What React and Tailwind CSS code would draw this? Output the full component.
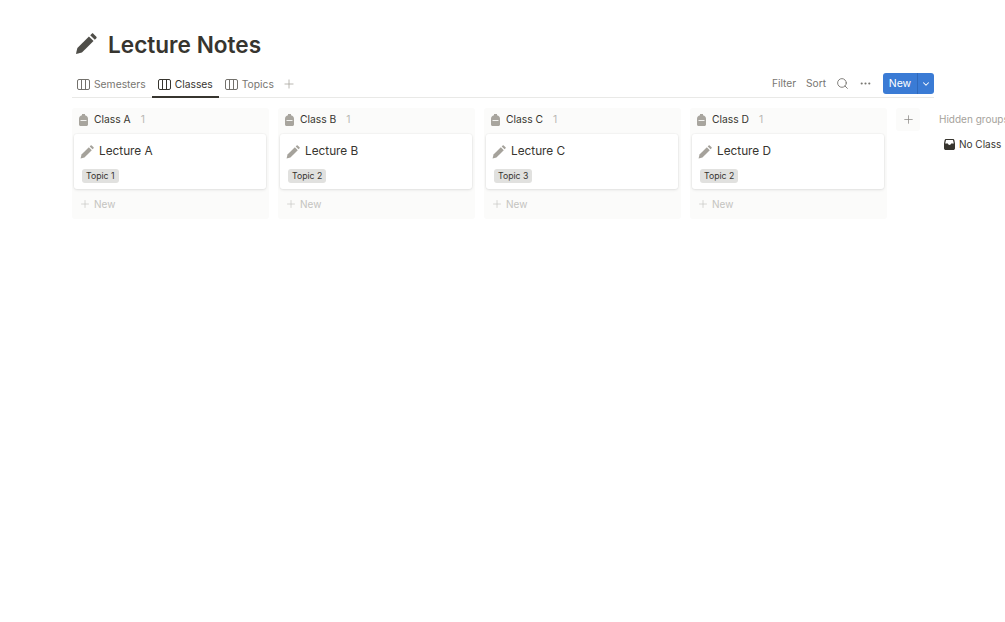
import { Plus, Search, ChevronDown, MoreHorizontal } from "lucide-react";

const columns = [
  { name: "Class A", lecture: "Lecture A", topic: "Topic 1" },
  { name: "Class B", lecture: "Lecture B", topic: "Topic 2" },
  { name: "Class C", lecture: "Lecture C", topic: "Topic 3" },
  { name: "Class D", lecture: "Lecture D", topic: "Topic 2" },
];

const tabs = [
  { label: "Semesters", active: false },
  { label: "Classes", active: true },
  { label: "Topics", active: false },
];

const Pencil = ({ className }) => (
  <svg viewBox="0 0 24 24" className={className} fill="currentColor">
    <path d="M1 23l1.6-6.6L15.2 3.8l5 5L7.6 21.4 1 23z" />
    <path d="M16.6 2.4l1.7-1.7c.5-.5 1.2-.5 1.7 0l3.3 3.3c.5.5.5 1.2 0 1.7l-1.7 1.7-5-5z" />
  </svg>
);

const Backpack = () => (
  <svg viewBox="0 0 9 12" className="h-[12px] w-[9px] text-[#a8a59e]" fill="currentColor">
    <path d="M3 0h3v1.300C7.800 1.700 9 3 9 4.800V10.500C9 11.300 8.300 12 7.500 12h-6C.700 12 0 11.300 0 10.500V4.800C0 3 1.200 1.700 3 1.300V0z" />
    <rect x="1.500" y="6" width="6" height="0.900" fill="#fbfbfa" />
  </svg>
);

const BoardIcon = ({ active }) => (
  <svg
    viewBox="0 0 13 11"
    className={`h-[11px] w-[13px] ${active ? "text-[#37352f]" : "text-[#73716c]"}`}
    fill="none"
    stroke="currentColor"
    strokeWidth="1"
  >
    <rect x="0.500" y="0.500" width="12" height="10" rx="1.500" />
    <path d="M4.500 0.500v10M8.500 0.500v10" />
  </svg>
);

const Inbox = () => (
  <svg viewBox="0 0 12 12" className="h-[11px] w-[11px] text-[#37352f]" fill="currentColor">
    <path
      fillRule="evenodd"
      d="M2.300 0h7.400c.8 0 1.400.5 1.600 1.200L12 5v5c0 1.100-.9 2-2 2H2c-1.100 0-2-.9-2-2V5l.7-3.800C.9.500 1.500 0 2.300 0zm-.1 1.200L1.300 5h2.900c.2 1 .9 1.600 1.800 1.600S7.600 6 7.800 5h2.900l-.9-3.800H2.200z"
    />
  </svg>
);

const Column = ({ name, lecture, topic }) => (
  <div className="h-[111px] w-[197px] shrink-0 rounded-[3px] bg-[#fbfbfa] px-[2px]">
    <div className="flex h-[23px] items-center pl-[5px] text-[10.300px]">
      <Backpack />
      <span className="ml-[6px] text-[#37352f]">{name}</span>
      <span className="ml-[10px] text-[#b9b8b4]">1</span>
    </div>
    <div className="mt-[3px] h-[55px] w-[192px] rounded-[3px] bg-white pl-[6px] pt-[9px] shadow-[0_0_0_1px_rgba(15,15,15,0.02),0_1px_3px_rgba(15,15,15,0.10)]">
      <div className="flex h-[18px] items-center">
        <Pencil className="h-[14px] w-[14px] text-[#a5a29b]" />
        <span className="ml-[5px] text-[11.800px] text-[#37352f]">{lecture}</span>
      </div>
      <span className="ml-[2px] mt-[5px] inline-block h-[14px] rounded-[3px] bg-[#e1e1df] px-[4px] text-[8.700px] leading-[14px] text-[#37352f]">
        {topic}
      </span>
    </div>
    <div className="flex h-[30px] items-center pl-[5px] text-[10px] text-[#c4c3bf]">
      <Plus className="h-3 w-3" strokeWidth={1.300} />
      <span className="ml-[3px]">New</span>
    </div>
  </div>
);

export default function App() {
  return (
    <div className="h-[622px] w-[1005px] overflow-hidden bg-white pl-[72px] font-['Inter',sans-serif] antialiased">
      <div className="flex h-[71px] items-end pb-[12px] pl-[3px]">
        <Pencil className="h-[22px] w-[22px] -translate-y-[4px] text-[#4f4e49]" />
        <h1 className="ml-[11px] text-[22.600px] font-semibold leading-[28px] text-[#37352f]">Lecture Notes</h1>
      </div>

      <div className="flex h-[27px] w-[862px] items-start border-b border-[#e9e9e7]">
        <div className="-ml-[1px] flex h-[27px] items-start">
          {tabs.map((tab) => (
            <div
              key={tab.label}
              className={`flex h-[27px] items-center gap-[4px] px-[6px] text-[10.300px] ${
                tab.active ? "border-b-2 border-[#37352f] pt-[2px] text-[#37352f]" : "text-[#787671]"
              }`}
            >
              <BoardIcon active={tab.active} />
              <span>{tab.label}</span>
            </div>
          ))}
          <div className="flex h-[26px] items-center pl-[2px] text-[#a5a29b]">
            <Plus className="h-[14px] w-[14px]" strokeWidth={1.300} />
          </div>
        </div>
        <div className="ml-auto flex h-[25px] items-center text-[10.200px] text-[#787671]">
          <span>Filter</span>
          <span className="ml-[10px]">Sort</span>
          <Search className="ml-[10px] h-[13px] w-[13px]" strokeWidth={1.700} />
          <MoreHorizontal className="ml-[10px] h-[13px] w-[13px]" strokeWidth={2} />
          <div className="ml-[11px] flex h-[21px] w-[51px] items-center rounded-[3px] bg-[#3a7bd5] text-white">
            <span className="w-[34px] text-center text-[10.500px]">New</span>
            <div className="flex h-full flex-1 items-center justify-center border-l border-[#2f69bb]">
              <ChevronDown className="h-[10px] w-[10px]" strokeWidth={2.500} />
            </div>
          </div>
        </div>
      </div>

      <div className="mt-[10px] flex items-start">
        <div className="flex gap-[9px]">
          {columns.map((col) => (
            <Column key={col.name} {...col} />
          ))}
        </div>
        <div className="ml-[9px] flex h-[23px] w-[24px] shrink-0 items-center justify-center rounded-[3px] bg-[#fbfbfa] text-[#8c8a85]">
          <Plus className="h-[13px] w-[13px]" strokeWidth={1.400} />
        </div>
        <div className="ml-[19px] shrink-0 text-[10px]">
          <div className="flex h-[23px] items-center whitespace-nowrap text-[#a5a29b]">Hidden groups</div>
          <div className="mt-[3px] flex h-[20px] items-center whitespace-nowrap pl-[5px] text-[#37352f]">
            <Inbox />
            <span className="ml-[4px]">No Class</span>
          </div>
        </div>
      </div>
    </div>
  );
}
